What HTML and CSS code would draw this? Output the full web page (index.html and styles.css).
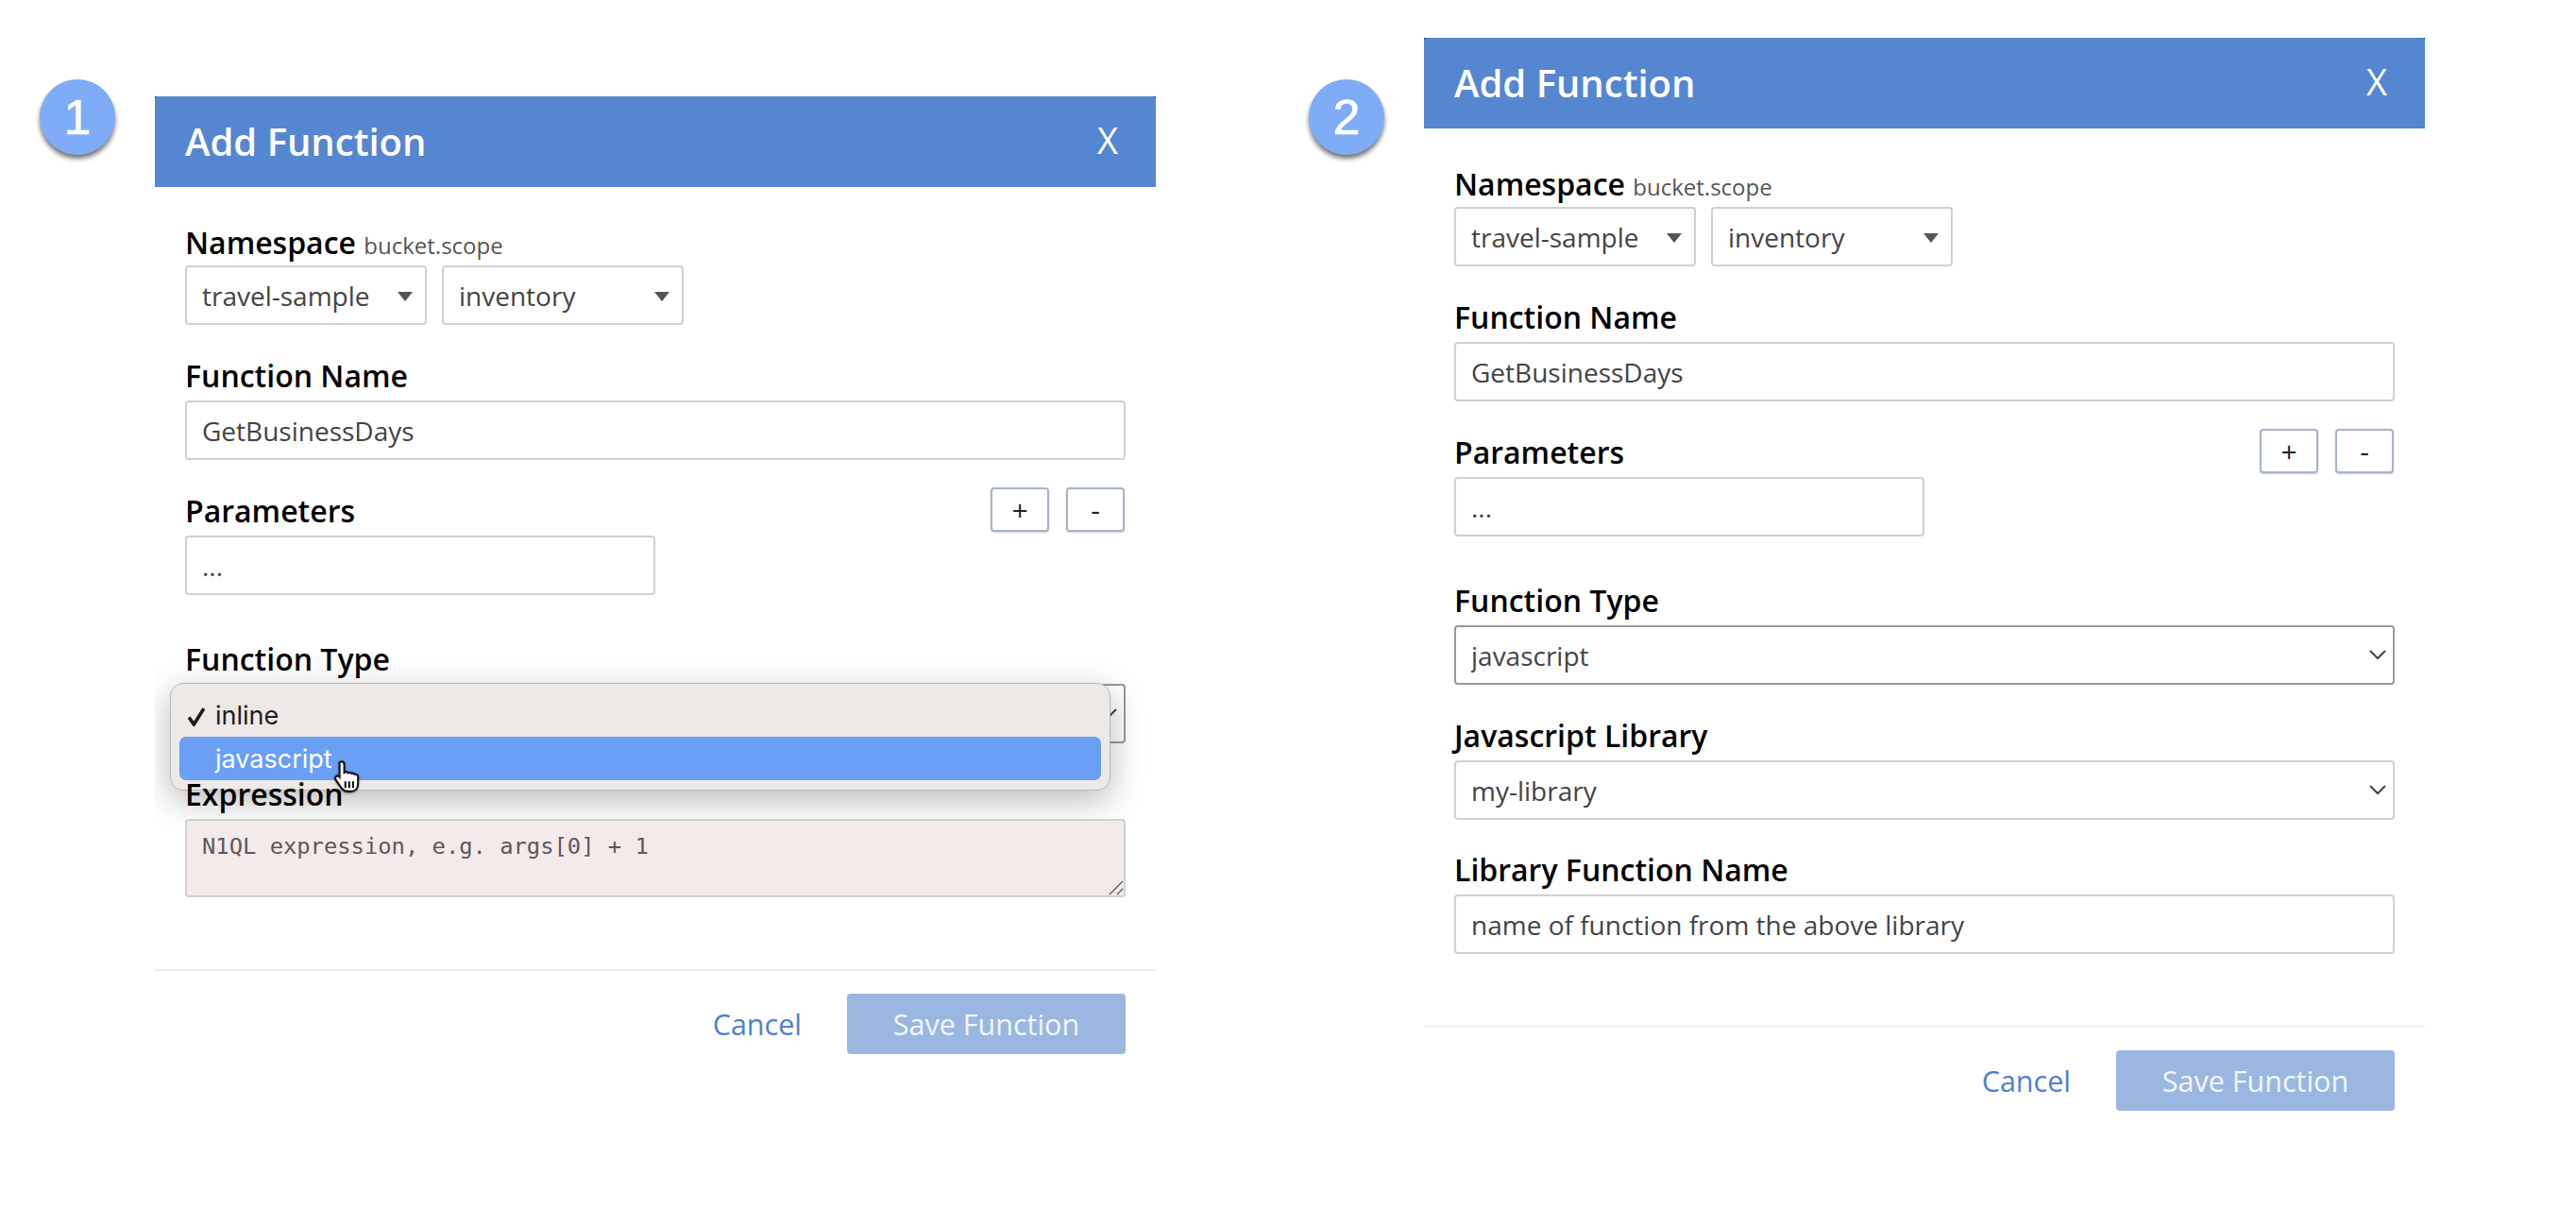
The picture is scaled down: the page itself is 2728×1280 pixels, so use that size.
FILE: index.html
```html
<!DOCTYPE html>
<html lang="en">
<head>
    <meta charset="UTF-8">
    <meta name="viewport" content="width=device-width, initial-scale=1.0">
    <title>Add Function</title>
    <link rel="stylesheet" href="styles.css">
</head>
<body>
    <div class="stage">

        <!-- Step 1: type dropdown open -->
        <section class="step step-one">
            <div class="badge">1</div>
            <div class="dialog">
                <header class="dialog-header">
                    <h2>Add Function</h2>
                    <span class="dialog-close">X</span>
                </header>
                <div class="dialog-body">
                    <div class="field field-namespace">
                        <label>Namespace <small>bucket.scope</small></label>
                        <div class="namespace">
                            <span class="picker"><select><option>travel-sample</option></select></span>
                            <span class="picker"><select><option>inventory</option></select></span>
                        </div>
                    </div>
                    <div class="field">
                        <label>Function Name</label>
                        <input type="text" value="GetBusinessDays">
                    </div>
                    <div class="field field-params">
                        <div class="params-head">
                            <label>Parameters</label>
                            <div class="params-buttons">
                                <button type="button">+</button>
                                <button type="button">-</button>
                            </div>
                        </div>
                        <input class="param-input" type="text" value="...">
                    </div>
                    <div class="field field-type">
                        <label>Function Type</label>
                        <span class="chevron-select focused">
                            <select><option>inline</option></select>
                            <svg viewBox="0 0 18 12"><path d="M1 2l8 8 8-8"/></svg>
                        </span>
                        <ul class="type-menu">
                            <li>
                                <svg class="tick" viewBox="0 0 20 20"><path d="M2 11l5 7L17 2"/></svg>
                                inline
                            </li>
                            <li class="active">javascript</li>
                        </ul>
                        <svg class="hand" viewBox="0 0 26 30">
                            <path d="M8 2c1.500 0 2.500 1 2.500 2.500V12l1-.5c1-.3 2 0 2.500.7 1-.6 2.300-.3 3 .6 1-.5 2.300-.2 3 .8 1.500-.5 3 .5 3 2.200V22c0 4-2.500 7-6.500 7h-3c-2.500 0-4-1-5.500-3l-5-7c-1-1.500-.8-2.800 0-3.500 1-.8 2.300-.5 3.200.5V4.500C5.500 3 6.500 2 8 2z" fill="#fff" stroke="#111" stroke-width="1.800"/>
                            <path d="M11.500 20v6M15 20v6M18.500 20v6" stroke="#111" stroke-width="1.800"/>
                        </svg>
                    </div>
                    <div class="field">
                        <label>Expression</label>
                        <textarea placeholder="N1QL expression, e.g. args[0] + 1"></textarea>
                        <svg class="grip" viewBox="0 0 16 16"><path d="M1 15L15 1M9 15l6-6"/></svg>
                    </div>
                </div>
                <footer class="dialog-footer">
                    <a class="cancel">Cancel</a>
                    <button type="button" class="save">Save Function</button>
                </footer>
            </div>
        </section>

        <!-- Step 2: javascript selected -->
        <section class="step step-two">
            <div class="badge">2</div>
            <div class="dialog">
                <header class="dialog-header">
                    <h2>Add Function</h2>
                    <span class="dialog-close">X</span>
                </header>
                <div class="dialog-body">
                    <div class="field field-namespace">
                        <label>Namespace <small>bucket.scope</small></label>
                        <div class="namespace">
                            <span class="picker"><select><option>travel-sample</option></select></span>
                            <span class="picker"><select><option>inventory</option></select></span>
                        </div>
                    </div>
                    <div class="field">
                        <label>Function Name</label>
                        <input type="text" value="GetBusinessDays">
                    </div>
                    <div class="field field-params">
                        <div class="params-head">
                            <label>Parameters</label>
                            <div class="params-buttons">
                                <button type="button">+</button>
                                <button type="button">-</button>
                            </div>
                        </div>
                        <input class="param-input" type="text" value="...">
                    </div>
                    <div class="field field-type">
                        <label>Function Type</label>
                        <span class="chevron-select focused">
                            <select><option>javascript</option></select>
                            <svg viewBox="0 0 18 12"><path d="M1 2l8 8 8-8"/></svg>
                        </span>
                    </div>
                    <div class="field">
                        <label>Javascript Library</label>
                        <span class="chevron-select">
                            <select><option>my-library</option></select>
                            <svg viewBox="0 0 18 12"><path d="M1 2l8 8 8-8"/></svg>
                        </span>
                    </div>
                    <div class="field">
                        <label>Library Function Name</label>
                        <input type="text" value="name of function from the above library">
                    </div>
                </div>
                <footer class="dialog-footer">
                    <a class="cancel">Cancel</a>
                    <button type="button" class="save">Save Function</button>
                </footer>
            </div>
        </section>

    </div>
</body>
</html>
```

FILE: styles.css
```css
/* Page */
body {
    margin: 0;
    background-color: #fff;
    font-family: "Open Sans", sans-serif;
    color: #000;
}

.stage {
    display: flex;
    align-items: flex-start;
    height: 1280px;
}

/* Each step is a numbered badge next to a dialog */
.step {
    position: relative;
    width: 1060px;
}

.step-one {
    margin: 102px 0 0 164px;
}

.step-two {
    margin: 40px 0 0 284px;
}

.badge {
    position: absolute;
    left: -122px;
    top: -18px;
    width: 80px;
    height: 80px;
    border-radius: 50%;
    background-color: #7eacf6;
    box-shadow: 0 4px 5px rgba(0, 0, 0, 0.55);
    color: #fff;
    font-family: "Liberation Sans", sans-serif;
    font-size: 52px;
    line-height: 80px;
    text-align: center;
    -webkit-text-stroke: 0.7px #fff;
}

.step-two .badge {
    top: 44px;
}

/* Dialog */
.dialog {
    background: linear-gradient(#333 4px, #fff 4px);
    overflow: hidden;
}

.dialog-header {
    display: flex;
    align-items: center;
    justify-content: space-between;
    box-sizing: border-box;
    height: 96px;
    padding: 0 40px 2px 32px;
    border-radius: 3px 3px 0 0;
    background-color: #5586d0;
    color: #fff;
}

.dialog-header h2 {
    margin: 0;
    font-size: 40px;
    font-weight: 600;
}

.dialog-close {
    margin-bottom: 3px;
    font-size: 38px;
}

.dialog-body {
    padding: 39px 32px 0;
}

.field {
    position: relative;
    margin-bottom: 33.5px;
}

.field:last-child {
    margin-bottom: 0;
}

label {
    display: block;
    margin-bottom: 6px;
    font-size: 32px;
    font-weight: 600;
    line-height: 40px;
}

label small {
    color: #555;
    font-size: 24px;
    font-weight: 400;
    line-height: 1;
}

.field-namespace label {
    margin-bottom: 4px;
}

/* Form controls */
input,
select,
textarea {
    display: block;
    box-sizing: border-box;
    width: 100%;
    height: 63px;
    padding: 1px 16px 0;
    border: 2px solid #d0d0d0;
    border-radius: 4px;
    outline: none;
    background-color: #fff;
    color: #444;
    font-family: "Open Sans", sans-serif;
    font-size: 28px;
    appearance: none;
}

.namespace {
    display: flex;
    gap: 16px;
}

.picker {
    position: relative;
    display: block;
    width: 256px;
}

.picker::after {
    content: "";
    position: absolute;
    right: 15px;
    top: 28px;
    border-left: 8px solid transparent;
    border-right: 8px solid transparent;
    border-top: 10px solid #555;
}

.chevron-select {
    position: relative;
    display: block;
}

.chevron-select svg {
    position: absolute;
    right: 9px;
    top: 25px;
    width: 18px;
    height: 12px;
    fill: none;
    stroke: #444;
    stroke-width: 2;
}

.chevron-select.focused select {
    border-color: #999;
}

/* Parameters */
.field-params {
    margin-top: -4px;
    margin-bottom: 48px;
}

.params-head {
    display: flex;
    align-items: flex-end;
    justify-content: space-between;
    margin-bottom: 4px;
}

.params-head label {
    margin-bottom: 2px;
}

.params-buttons {
    display: flex;
    gap: 18px;
    padding-right: 1px;
}

.params-buttons button {
    width: 62px;
    height: 47px;
    padding: 0;
    border: 2px solid #a6b4c8;
    border-radius: 4px;
    background-color: #fff;
    box-shadow: 0 1px 2px rgba(0, 0, 0, 0.2);
    color: #222;
    font-family: "Open Sans", sans-serif;
    font-size: 30px;
}

.param-input {
    width: 498px;
}

/* Open dropdown of step 1 */
.type-menu {
    position: absolute;
    left: -16px;
    top: 45px;
    width: 996px;
    height: 114px;
    box-sizing: border-box;
    margin: 0;
    padding: 10px 9px;
    border: 1px solid #bdb9b6;
    border-radius: 14px;
    background-color: #ede9e6;
    box-shadow: 0 10px 36px rgba(0, 0, 0, 0.28);
    list-style: none;
    font-family: "Inter", sans-serif;
    font-size: 27px;
    color: #1c1c1c;
}

.type-menu li {
    position: relative;
    height: 46px;
    padding-left: 38px;
    border-radius: 7px;
    line-height: 48px;
}

.type-menu li.active {
    background-color: #699ff5;
    color: #fff;
}

.tick {
    position: absolute;
    left: 8px;
    top: 14px;
    width: 21px;
    height: 21px;
    fill: none;
    stroke: #1c1c1c;
    stroke-width: 3.5;
}

.hand {
    position: absolute;
    left: 156px;
    top: 126px;
    width: 31px;
    height: 35px;
    filter: drop-shadow(0 1px 1px rgba(0, 0, 0, 0.4));
}

/* Expression */
textarea {
    height: 83.5px;
    padding: 13px 16px;
    background-color: #f5eaea;
    font-family: "DejaVu Sans Mono", monospace;
    font-size: 23.8px;
    resize: none;
}

textarea::placeholder {
    color: #5a5a5a;
    opacity: 1;
}

.grip {
    position: absolute;
    right: 2px;
    bottom: 2px;
    width: 16px;
    height: 16px;
    fill: none;
    stroke: #555;
    stroke-width: 1.2;
}

/* Footer */
.dialog-footer {
    display: flex;
    align-items: center;
    justify-content: flex-end;
    gap: 48px;
    margin-top: 76px;
    padding: 24px 32px 0;
    border-top: 2px solid #eceded;
}

.cancel {
    color: #4f81cf;
    font-size: 30.5px;
}

.save {
    width: 295px;
    height: 64px;
    padding: 0;
    border: none;
    border-radius: 4px;
    background-color: #9ab7e2;
    color: #f2f5fb;
    font-family: "Open Sans", sans-serif;
    font-size: 30.5px;
}
```
